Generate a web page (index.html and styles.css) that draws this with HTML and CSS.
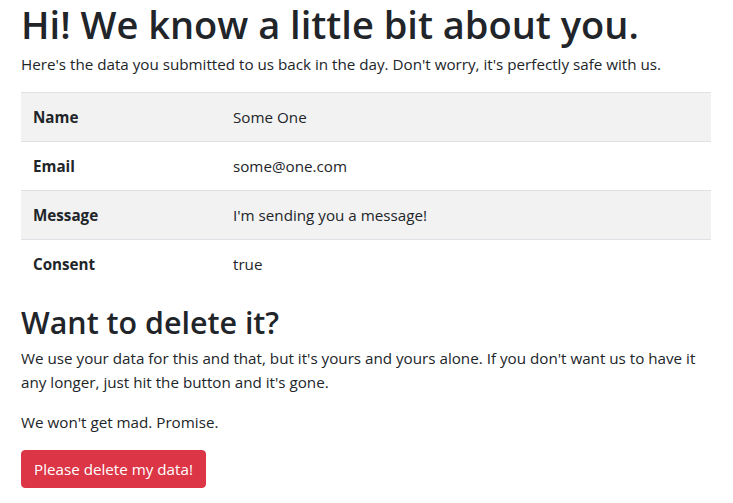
FILE: index.html
```html
<!DOCTYPE html>
<html lang="en">
<head>
<meta charset="utf-8">
<title>Your data</title>
<link rel="stylesheet" href="styles.css">
</head>
<body>
<main class="page">
  <h1 class="title">Hi! We know a little bit about you.</h1>
  <p class="text">Here's the data you submitted to us back in the day. Don't worry, it's perfectly safe with us.</p>
  <table class="data">
    <tbody>
      <tr class="odd"><th>Name</th><td>Some One</td></tr>
      <tr><th>Email</th><td>some@one.com</td></tr>
      <tr class="odd"><th>Message</th><td>I'm sending you a message!</td></tr>
      <tr><th>Consent</th><td>true</td></tr>
    </tbody>
  </table>
  <h2 class="subtitle">Want to delete it?</h2>
  <p class="text">We use your data for this and that, but it's yours and yours alone. If you don't want us to have it any longer, just hit the button and it's gone.</p>
  <p class="text">We won't get mad. Promise.</p>
  <button class="btn-danger" type="button">Please delete my data!</button>
</main>
</body>
</html>
```
FILE: styles.css
```css
html, body {
  margin: 0;
  padding: 0;
  background: #fff;
}
body {
  font-family: "Open Sans", "Noto Sans", sans-serif;
  font-size: 15.2px;
  line-height: 24px;
  color: #212529;
}
.page {
  padding: 0 22px 0 21px;
}
.title {
  font-size: 38px;
  line-height: 48px;
  font-weight: 600;
  margin: 0 0 4px;
}
.subtitle {
  font-size: 30.4px;
  line-height: 38px;
  font-weight: 600;
  margin: 16px 0 4px;
}
.text {
  margin: 0 0 16px;
}
.data {
  width: 100%;
  border-collapse: collapse;
  margin: 0;
}
.data th, .data td {
  text-align: left;
  padding: 12px;
  border-top: 1px solid #dee2e6;
  vertical-align: top;
}
.data th {
  width: 176px;
  font-weight: 700;
}
.data .odd {
  background: #f2f2f2;
}
.btn-danger {
  font-family: inherit;
  font-size: 15.2px;
  line-height: 24px;
  color: #fff;
  background: #dc3545;
  border: 1px solid #dc3545;
  border-radius: 4px;
  padding: 6px 12px;
  cursor: pointer;
}
```
